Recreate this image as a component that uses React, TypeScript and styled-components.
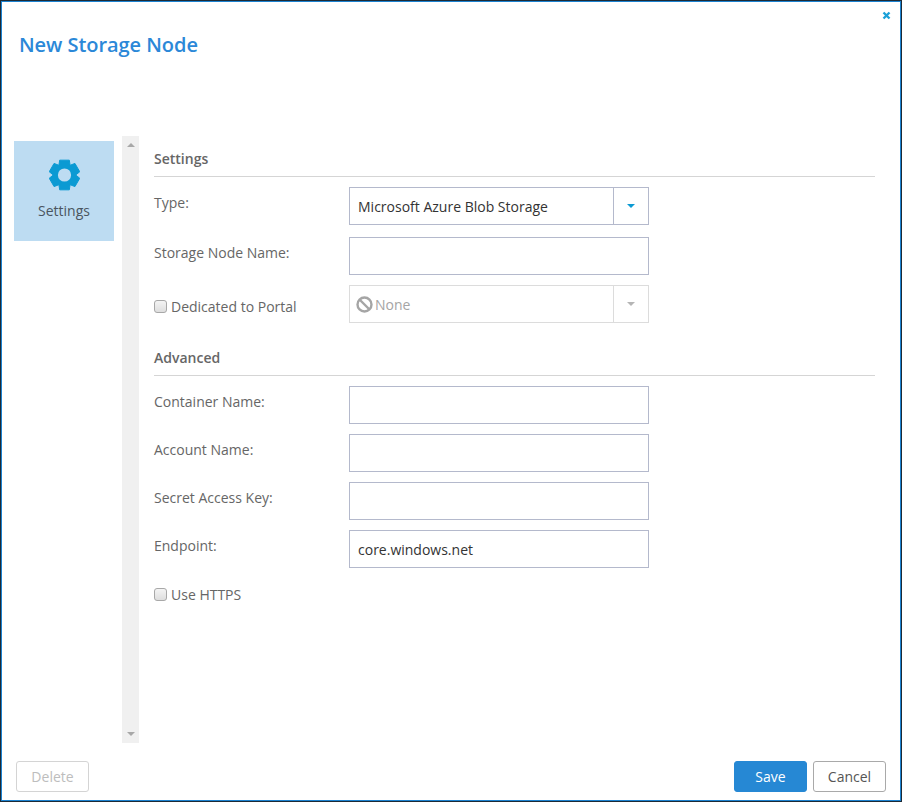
import React from "react";
import styled, { createGlobalStyle } from "styled-components";

const Global = createGlobalStyle`
  html, body { margin: 0; padding: 0; background: #fff; }
  body { font-family: "Open Sans", "Liberation Sans", sans-serif; }
  * { box-sizing: border-box; }
`;

const Dialog = styled.div`
  position: relative;
  width: 902px;
  height: 802px;
  border: 1px solid #1c2a36;
  padding: 1px;
  box-shadow: inset 0 0 0 1px #1b82d0;
  background: #fff;
  display: flex;
  flex-direction: column;
  overflow: hidden;
`;
const CloseIcon = styled.svg`
  position: absolute;
  top: 10px;
  right: 10px;
  width: 9px;
  height: 9px;
`;
const Title = styled.h1`
  margin: 0;
  height: 134px;
  padding: 28px 0 0 17px;
  font-size: 20px;
  line-height: 30px;
  font-weight: 600;
  letter-spacing: -0.05px;
  color: #2b88d8;
`;
const Body = styled.div`
  flex: 1;
  display: flex;
  min-height: 0;
`;
const Nav = styled.nav`
  width: 120px;
  padding: 5px 0 0 12px;
`;
const NavTile = styled.div`
  width: 100px;
  height: 100px;
  background: #bddcf2;
  display: flex;
  flex-direction: column;
  align-items: center;
  padding-top: 18px;
  font-size: 14px;
  line-height: 20px;
  color: #4a5560;
`;
const GearIcon = styled.svg`
  width: 31px;
  height: 32px;
  margin-bottom: 10px;
`;
const ScrollTrack = styled.div`
  width: 17px;
  height: 607px;
  background: #f0f0f0;
  display: flex;
  flex-direction: column;
  justify-content: space-between;
  align-items: center;
  padding: 7px 0;
`;
const Arrow = styled.span<{ $up?: boolean; $color: string }>`
  width: 0;
  height: 0;
  border-left: 4px solid transparent;
  border-right: 4px solid transparent;
  ${(p) => (p.$up ? "border-bottom" : "border-top")}: 4px solid ${(p) => p.$color};
`;
const Content = styled.div`
  margin-left: 15px;
  width: 721px;
  display: flex;
  flex-direction: column;
  padding-top: 11px;
`;
const Section = styled.h2<{ $top?: number }>`
  margin: ${(p) => p.$top ?? 0}px 0 10px;
  height: 30px;
  border-bottom: 1px solid #d5d5d5;
  font-size: 14px;
  line-height: 24px;
  font-weight: 600;
  color: #666;
`;
const Row = styled.div<{ $gap?: number }>`
  display: flex;
  align-items: center;
  height: 38px;
  margin-bottom: ${(p) => p.$gap ?? 10}px;
`;
const Label = styled.label`
  width: 195px;
  margin-top: -8px;
  font-size: 14px;
  color: #666;
`;
const CheckLabel = styled.label`
  width: 195px;
  margin-top: 4px;
  display: flex;
  align-items: center;
  gap: 4px;
  font-size: 14px;
  color: #666;
`;
const Box = styled.span`
  width: 13px;
  height: 13px;
  border: 1px solid #a8a8a8;
  border-radius: 3px;
  background: linear-gradient(#f4f4f4, #dedede);
`;
const TextBox = styled.div`
  width: 300px;
  height: 38px;
  border: 1px solid #b4b9cc;
  padding: 1px 0 0 8px;
  font-size: 14px;
  line-height: 36px;
  color: #333;
`;
const Select = styled.div<{ $off?: boolean }>`
  width: 300px;
  height: 38px;
  border: 1px solid ${(p) => (p.$off ? "#dcdcdc" : "#b4b9cc")};
  display: flex;
  font-size: 14px;
  color: ${(p) => (p.$off ? "#a5a5a5" : "#333")};
`;
const SelectValue = styled.div<{ $off?: boolean }>`
  flex: 1;
  display: flex;
  align-items: center;
  gap: 2px;
  padding-left: ${(p) => (p.$off ? 6 : 8)}px;
`;
const SelectButton = styled.div<{ $off?: boolean }>`
  width: 35px;
  border-left: 1px solid ${(p) => (p.$off ? "#dcdcdc" : "#b4b9cc")};
  display: flex;
  align-items: center;
  justify-content: center;
`;
const NoneIcon = styled.svg`
  width: 17px;
  height: 17px;
`;
const Footer = styled.footer`
  height: 58px;
  padding: 19px 14px 0;
  display: flex;
  gap: 6px;
`;
const Button = styled.button<{ $kind: "primary" | "plain" | "off" }>`
  height: 31px;
  width: 73px;
  border-radius: 3px;
  font: 14px "Open Sans", sans-serif;
  padding: 0;
  background: ${(p) => (p.$kind === "primary" ? "#2688d4" : "#fff")};
  border: 1px solid ${(p) =>
    p.$kind === "primary" ? "#2688d4" : p.$kind === "plain" ? "#a9a9a9" : "#d4d4d4"};
  color: ${(p) => (p.$kind === "primary" ? "#fff" : p.$kind === "plain" ? "#555" : "#bdbdbd")};
`;
const Spacer = styled.div`
  flex: 1;
`;

const gearPath = (() => {
  const cx = 15.5;
  const cy = 16;
  const outer = 15.6;
  const root = 11.2;
  const pts: string[] = [];
  for (let i = 0; i < 6; i++) {
    const a = (i * 60 * Math.PI) / 180;
    [
      [-18, outer],
      [18, outer],
      [30, root],
    ].forEach(([d, r]) => {
      const t = a + (d * Math.PI) / 180;
      pts.push(`${(cx + r * Math.sin(t)).toFixed(2)} ${(cy - r * Math.cos(t)).toFixed(2)}`);
    });
  }
  return `M${pts.join("L")}Z`;
})();

export default function App() {
  return (
    <Dialog>
      <Global />
      <CloseIcon viewBox="0 0 9 9">
        <path d="M1.5 1.5L7.5 7.5M7.5 1.5L1.5 7.5" stroke="#1ba1d8" strokeWidth="2.4" />
      </CloseIcon>
      <Title>New Storage Node</Title>
      <Body>
        <Nav>
          <NavTile>
            <GearIcon viewBox="0 0 31 32">
              <path d={gearPath} fill="#0b9ad3" stroke="#0b9ad3" strokeWidth="1" strokeLinejoin="round" />
              <circle cx="15.5" cy="16" r="6.6" fill="#bddcf2" />
            </GearIcon>
            Settings
          </NavTile>
        </Nav>
        <ScrollTrack>
          <Arrow $up $color="#a8a8a8" />
          <Arrow $color="#a8a8a8" />
        </ScrollTrack>
        <Content>
          <Section>Settings</Section>
          <Row $gap={12}>
            <Label>Type:</Label>
            <Select>
              <SelectValue>Microsoft Azure Blob Storage</SelectValue>
              <SelectButton>
                <Arrow $color="#0b9ad3" />
              </SelectButton>
            </Select>
          </Row>
          <Row>
            <Label>Storage Node Name:</Label>
            <TextBox />
          </Row>
          <Row $gap={6}>
            <CheckLabel>
              <Box />
              Dedicated to Portal
            </CheckLabel>
            <Select $off>
              <SelectValue $off>
                <NoneIcon viewBox="0 0 17 17">
                  <circle cx="8.5" cy="8.5" r="7" fill="none" stroke="#a5a5a5" strokeWidth="2.4" />
                  <path d="M3.5 3.5L13.5 13.5" stroke="#a5a5a5" strokeWidth="2.4" />
                </NoneIcon>
                None
              </SelectValue>
              <SelectButton $off>
                <Arrow $color="#b5b5b5" />
              </SelectButton>
            </Select>
          </Row>
          <Section $top={17}>Advanced</Section>
          <Row>
            <Label>Container Name:</Label>
            <TextBox />
          </Row>
          <Row>
            <Label>Account Name:</Label>
            <TextBox />
          </Row>
          <Row>
            <Label>Secret Access Key:</Label>
            <TextBox />
          </Row>
          <Row $gap={5}>
            <Label>Endpoint:</Label>
            <TextBox>core.windows.net</TextBox>
          </Row>
          <Row>
            <CheckLabel>
              <Box />
              Use HTTPS
            </CheckLabel>
          </Row>
        </Content>
      </Body>
      <Footer>
        <Button $kind="off">Delete</Button>
        <Spacer />
        <Button $kind="primary">Save</Button>
        <Button $kind="plain">Cancel</Button>
      </Footer>
    </Dialog>
  );
}
